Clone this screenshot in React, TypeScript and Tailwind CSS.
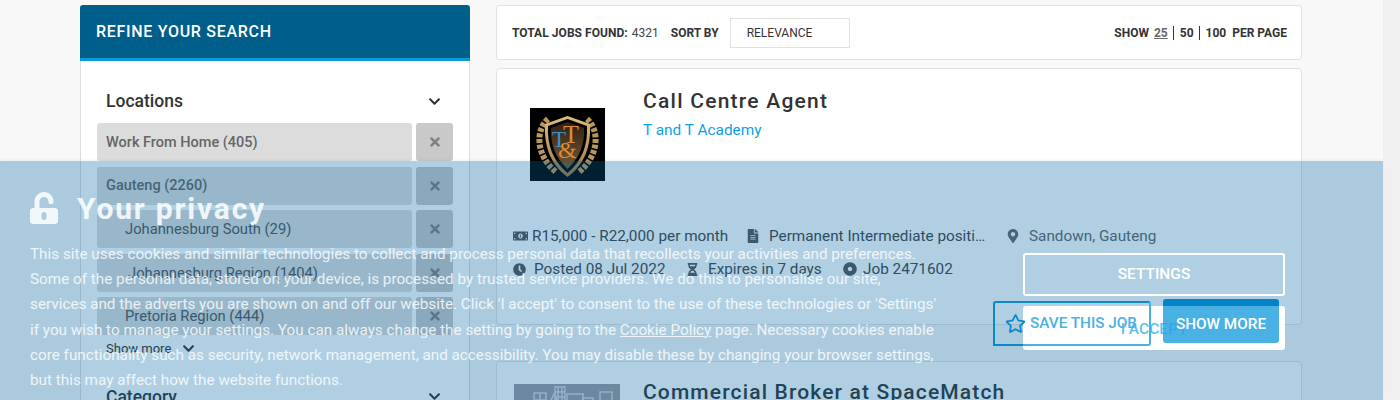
import React from "react";
import { FaChevronDown, FaTimes, FaMoneyBillAlt, FaFileAlt, FaMapMarkerAlt, FaClock, FaHourglassHalf, FaDotCircle, FaRegStar, FaUnlockAlt } from "react-icons/fa";

function Row({ label, sub, pl }: { label: string; sub?: boolean; pl?: string }) {
  return (
    <div className="flex gap-[4px] h-[38px] mb-[5.5px]">
      <div className={`w-[315px] rounded-[3px] bg-[#dcdcdc] flex items-center pt-[1px] ${sub ? `${pl ?? "pl-[28px]"} text-[14.75px] text-[#555] font-normal` : "pl-[9px] text-[14.5px] text-[#666] font-medium"}`}>{label}</div>
      <div className="w-[37px] rounded-[3px] bg-[#c9c9c9] flex items-center justify-center text-[#808080] text-[14px]"><FaTimes /></div>
    </div>
  );
}

function Logo() {
  return (
    <svg width="75" height="73" viewBox="0 0 75 73" className="block">
      <defs>
        <linearGradient id="g" x1="0" y1="0" x2="0" y2="1"><stop offset="0" stopColor="#e0bc7c" /><stop offset="1" stopColor="#9a7a48" /></linearGradient>
        <linearGradient id="s" x1="0" y1="0" x2="0" y2="1"><stop offset="0" stopColor="#2e2114" /><stop offset="1" stopColor="#7c5a30" /></linearGradient>
      </defs>
      <rect width="75" height="73" fill="#000" />
      <path d="M18 11 C5 22 6 48 26 64" fill="none" stroke="#b8975f" strokeWidth="6" strokeDasharray="4 1.6" />
      <path d="M57 11 C70 22 69 48 49 64" fill="none" stroke="#b8975f" strokeWidth="6" strokeDasharray="4 1.6" />
      <path d="M37.5 8 L60 16 C61 38 55 56 37.5 69 C20 56 14 38 15 16Z" fill="url(#g)" />
      <path d="M37.5 11 L57 18 C58 37 52 53 37.5 65 C23 53 17 37 18 18Z" fill="#000" />
      <path d="M37.5 14 L54 20 C55 37 49 50 37.5 61 C26 50 20 37 21 20Z" fill="url(#s)" />
      <text x="22" y="39" fontFamily="Liberation Serif, serif" fontSize="23" fill="#3f8fc4">T</text>
      <text x="33" y="35" fontFamily="Liberation Serif, serif" fontSize="26" fill="#d98a3c">T</text>
      <text x="28" y="50" fontFamily="Liberation Serif, serif" fontSize="24" fill="#d98a3c">&amp;</text>
    </svg>
  );
}

function Buildings() {
  return (
    <svg width="106" height="40" viewBox="0 0 106 40" className="block">
      <rect width="106" height="40" fill="#9c9ca0" />
      <g fill="none" stroke="#d8d8dc" strokeWidth="1.4">
        <rect x="20" y="9" width="12" height="14" />
        <path d="M26 9v14M20 16h12" />
        <path d="M34 23 L40 10 L46 23" />
        <rect x="41" y="3" width="10" height="20" />
        <path d="M44 3v20M48 3v20M41 8h10M41 13h10" />
        <rect x="53" y="10" width="16" height="13" />
        <rect x="69" y="14" width="10" height="9" />
        <rect x="86" y="8" width="12" height="15" />
      </g>
    </svg>
  );
}

export default function App() {
  return (
    <div className="relative flex h-[400px] w-[1400px] overflow-hidden bg-[#f8f8f8] font-['Roboto',sans-serif]">
      <div className="flex flex-1 min-w-0 pl-[80px] pt-[5px] gap-[26px]">
        <aside className="w-[390px] shrink-0">
          <div className="h-[56px] rounded-t-[3px] bg-[#005e8a] border-b-[3px] border-[#0a9ad8] flex items-center pl-[16px] pt-[1px] text-white text-[16px] font-medium tracking-[0.7px]">REFINE YOUR SEARCH</div>
          <div className="bg-white border-x border-[#dcdcdc] h-[400px] px-[16px]">
            <div className="flex items-center justify-between pt-[21px] pl-[9px] pr-[12px] h-[62px] pb-[3px] text-[17.5px] font-medium text-[#333]">
              <span>Locations</span>
              <FaChevronDown className="text-[13px]" />
            </div>
            <Row label="Work From Home (405)" />
            <Row label="Gauteng (2260)" />
            <Row label="Johannesburg South (29)" sub />
            <Row label="Johannesburg Region (1404)" sub pl="pl-[31px]" />
            <Row label="Pretoria Region (444)" sub />
            <div className="flex items-center gap-[11px] pl-[9px] -mt-[2px] h-[20px] text-[13px] text-[#333]">
              <span>Show more</span>
              <FaChevronDown className="text-[13px]" />
            </div>
            <div className="flex items-center justify-between pl-[9px] pr-[12px] mt-[25px] text-[17.5px] font-medium text-[#333]">
              <span>Category</span>
              <FaChevronDown className="text-[13px]" />
            </div>
          </div>
        </aside>
        <main className="w-[806px] shrink-0">
          <div className="h-[55px] bg-white border border-[#e2e2e2] rounded-[3px] flex items-center pl-[15px] pr-[14px] text-[12px] text-[#333]">
            <span className="font-bold tracking-[0.05px]">TOTAL JOBS FOUND:</span>
            <span className="ml-[4px] text-[#444]">4321</span>
            <span className="ml-[12px] font-bold">SORT BY</span>
            <div className="ml-[11px] w-[120px] h-[30px] border border-[#e2e2e2] flex items-center pl-[16px] text-[#333]">RELEVANCE</div>
            <div className="ml-auto flex items-center font-bold">
              <span>SHOW</span>
              <span className="ml-[5px] underline text-[#666]">25</span>
              <span className="ml-[5px] pl-[6px] border-l border-[#333] leading-[14px]">50</span>
              <span className="ml-[5px] pl-[6px] border-l border-[#333] leading-[14px]">100</span>
              <span className="ml-[6px]">PER PAGE</span>
            </div>
          </div>
          <article className="relative mt-[8px] h-[257px] bg-white border border-[#e2e2e2] rounded-[4px]">
            <div className="flex pl-[33px] pt-[39px]">
              <Logo />
              <div className="ml-[38px] -mt-[21px]">
                <h2 className="text-[21px] leading-[28px] font-medium tracking-[1.25px] text-[#333]">Call Centre Agent</h2>
                <div className="mt-[5px] text-[15.4px] leading-[20px] text-[#0e9fe6]">T and T Academy</div>
              </div>
            </div>
            <div className="mt-[45px] pl-[16px] text-[15.3px] leading-[20px] text-[#444]">
              <div className="flex items-center h-[20px]">
                <FaMoneyBillAlt className="text-[14px] text-[#555] w-[15px]" />
                <span className="ml-[4px] w-[214px] whitespace-nowrap">R15,000 - R22,000 per month</span>
                <FaFileAlt className="text-[14px] text-[#555]" />
                <span className="ml-[9px] w-[217px] whitespace-nowrap overflow-hidden">Permanent Intermediate positi…</span>
                <FaMapMarkerAlt className="ml-[20px] text-[14px] text-[#666]" />
                <span className="ml-[9px] text-[#666]">Sandown, Gauteng</span>
              </div>
              <div className="flex items-center h-[20px] mt-[13px]">
                <FaClock className="text-[13px] text-[#555]" />
                <span className="ml-[8px] w-[152px] whitespace-nowrap">Posted 08 Jul 2022</span>
                <FaHourglassHalf className="text-[13px] text-[#555]" />
                <span className="ml-[9px] w-[135px] whitespace-nowrap">Expires in 7 days</span>
                <FaDotCircle className="text-[14px] text-[#555]" />
                <span className="ml-[6px] whitespace-nowrap">Job 2471602</span>
              </div>
            </div>
          </article>
          <article className="mt-[36px] h-[100px] bg-white border border-[#e2e2e2] rounded-[4px] flex pl-[17px] pt-[22px]">
            <Buildings />
            <h2 className="ml-[23px] -mt-[6px] text-[21px] leading-[28px] font-medium tracking-[1.15px] text-[#333]">Commercial Broker at SpaceMatch</h2>
          </article>
        </main>
      </div>
      <div className="w-[17px] shrink-0 bg-[#f0f0f0]" />

      {/* cookie banner */}
      <div className="absolute left-0 top-[161px] w-[1383px] h-[239px] bg-[rgba(0,100,160,0.31)] shadow-[0_-1px_3px_rgba(0,0,0,0.06)] flex justify-between pl-[30px] pr-[98px] text-white">
        <div>
          <div className="flex items-center h-[34px] mt-[30px] text-white/85">
            <FaUnlockAlt className="text-[34px] w-[28px]" />
            <span className="ml-[19px] text-[30px] font-bold tracking-[1.8px]">Your privacy</span>
          </div>
          <p className="mt-[17px] text-[15.28px] leading-[25.2px] text-white/80 whitespace-nowrap">
            This site uses cookies and similar technologies to collect and process personal data that recollects your activities and preferences.<br />
            Some of the personal data, stored on your device, is processed by trusted service providers. We do this to personalise our site,<br />
            services and the adverts you are shown on and off our website. Click 'I accept' to consent to the use of these technologies or 'Settings'<br />
            if you wish to manage your settings. You can always change the setting by going to the <span className="underline">Cookie Policy</span> page. Necessary cookies enable<br />
            core functionality such as security, network management, and accessibility. You may disable these by changing your browser settings,<br />
            but this may affect how the website functions.
          </p>
        </div>
        <div className="w-[262px] pt-[92px]">
          <div className="h-[43px] rounded-[3px] border-2 border-white flex items-center justify-center text-[15.5px] font-medium">SETTINGS</div>
          <div className="mt-[10px] h-[44px] rounded-[3px] bg-white flex items-center justify-center text-[15.5px] font-medium text-[#0e9fe6]/70 pt-[3px]">I ACCEPT</div>
        </div>
      </div>

      {/* job actions showing above the banner */}
      <div className="absolute left-[993px] top-[301px] w-[158px] h-[45px] rounded-[3px] border-2 border-t-[#0a88c8] border-l-[#0a88c8] border-r-[#4ab1e5] border-b-[#4ab1e5] flex items-center pl-[10px] text-[15.3px] font-medium text-[#4ab1e5] whitespace-nowrap">
        <FaRegStar className="text-[21px] text-[#0a88c8]" />
        <span className="ml-[4px]">SAVE THIS JOB</span>
        <span className="absolute -left-[2px] -bottom-[2px] w-[30px] h-[2px] bg-[#0a88c8]" />
      </div>
      <div className="absolute left-[1163px] top-[299px] w-[116px] h-[44px] rounded-[3px] border-t-[7px] border-[#0484c6] bg-[#2aa3e0]/85 flex items-center justify-center text-[15.3px] font-medium text-white whitespace-nowrap pb-[1px]">SHOW MORE</div>
    </div>
  );
}
